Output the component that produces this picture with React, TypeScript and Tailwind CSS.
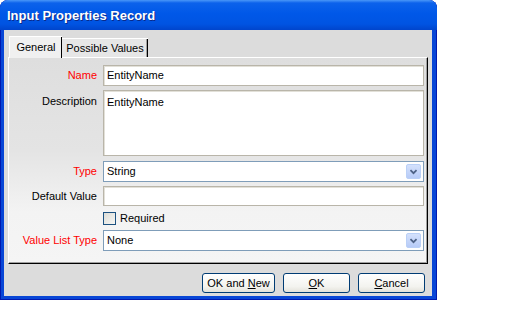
import React from "react";

const Chevron = () => (
  <svg width="15" height="15" viewBox="0 0 15 15">
    <path d="M4 6 L7.5 9.5 L11 6" fill="none" stroke="#4d6185" strokeWidth="2" />
  </svg>
);

const TextBox = ({ value, className = "" }: { value?: string; className?: string }) => (
  <div
    className={`border border-[#b9b5a9] bg-white px-[3px] text-black shadow-[inset_1px_1px_0_#e2e0d8] ${className}`}
  >
    {value}
  </div>
);

const Select = ({ value }: { value: string }) => (
  <div className="flex h-[21px] items-center justify-between border border-[#7f9db9] bg-white pl-[3px] pr-[2px]">
    <span>{value}</span>
    <div className="flex h-[15px] w-[15px] items-center justify-center rounded-[2px] border border-[#bad0f7] bg-[linear-gradient(to_bottom,#d4e1fc,#b7cbf7)]">
      <Chevron />
    </div>
  </div>
);

const Label = ({ text, red, top }: { text: string; red?: boolean; top?: boolean }) => (
  <div
    className={`flex justify-end pr-[1px] ${top ? "items-start pt-[3px]" : "items-center"} ${
      red ? "text-[#ff0000]" : "text-black"
    }`}
  >
    {text}
  </div>
);

const Button = ({ children, width }: { children: React.ReactNode; width: string }) => (
  <button
    type="button"
    className={`${width} h-[20px] rounded-[3px] border border-[#003c74] bg-[linear-gradient(to_bottom,#ffffff,#f3f3ef_70%,#e4e2da)] text-[11px] text-black`}
  >
    {children}
  </button>
);

export default function App() {
  return (
    <div className="h-[310px] w-[527px] bg-white font-['Liberation_Sans',Arial,sans-serif] text-[11px]">
      <div className="flex h-[300px] w-[437px] flex-col overflow-hidden rounded-t-[8px] bg-[#0846d6] shadow-[inset_1px_0_0_#0019b0,inset_-1px_0_0_#0019b0,inset_0_-1px_0_#0019b0]">
        {/* title bar */}
        <div className="flex h-[30px] shrink-0 items-center bg-[linear-gradient(to_bottom,#4a97f8_0%,#0c62eb_10%,#0058e8_45%,#0054e2_80%,#0045cc_100%)] pl-[7px] pt-[1px]">
          <span className="text-[13px] font-bold tracking-[0px] text-white [text-shadow:1px_1px_0_#0a2a8a]">
            Input Properties Record
          </span>
        </div>

        {/* body */}
        <div className="mb-[4px] ml-[4px] mr-[5px] flex flex-1 flex-col bg-[#dcdcdc] px-[4px] pt-[6px]">
          {/* tabs */}
          <div className="flex h-[21px] items-end pl-[1px]">
            <div className="relative z-10 mb-[-1px] flex h-[22px] w-[53px] items-center justify-center border-l border-t border-white bg-[#f0f0f0] shadow-[inset_-1px_0_0_#000]">
              General
            </div>
            <div className="flex h-[19px] w-[86px] items-center justify-center border-t border-white bg-[#e6e6e6] shadow-[inset_-1px_0_0_#000,inset_-2px_0_0_#a0a0a0]">
              Possible Values
            </div>
          </div>

          {/* panel */}
          <div className="h-[207px] border border-b-black border-l-white border-r-black border-t-white bg-[linear-gradient(to_bottom,#dedede,#e4e4e4_45%,#f3f3f3_75%,#f5f5f5)] pr-[3px] pt-[7px] shadow-[inset_-1px_-1px_0_#a0a0a0]">
            <div className="grid grid-cols-[89px_1fr] gap-x-[5px]">
              <Label text="Name" red />
              <TextBox value="EntityName" className="flex h-[21px] items-center" />

              <div className="col-span-2 h-[4px]" />
              <Label text="Description" top />
              <TextBox value="EntityName" className="h-[66px] pt-[3px]" />

              <div className="col-span-2 h-[5px]" />
              <Label text="Type" red />
              <Select value="String" />

              <div className="col-span-2 h-[4px]" />
              <Label text="Default Value" />
              <TextBox className="h-[20px]" />

              <div className="col-span-2 h-[5px]" />
              <div />
              <div className="flex h-[14px] items-center gap-[4px]">
                <div className="h-[13px] w-[13px] border border-[#1c5180] bg-[linear-gradient(135deg,#dcdcd6,#f6f6f4)]" />
                <span>Required</span>
              </div>

              <div className="col-span-2 h-[5px]" />
              <Label text="Value List Type" red />
              <Select value="None" />
            </div>
          </div>

          {/* buttons */}
          <div className="mt-[9px] flex justify-end gap-[8px] pr-[3px]">
            <Button width="w-[73px]">
              OK and <span className="underline">N</span>ew
            </Button>
            <Button width="w-[67px]">
              <span className="underline">O</span>K
            </Button>
            <Button width="w-[67px]">
              <span className="underline">C</span>ancel
            </Button>
          </div>
        </div>
      </div>
    </div>
  );
}
